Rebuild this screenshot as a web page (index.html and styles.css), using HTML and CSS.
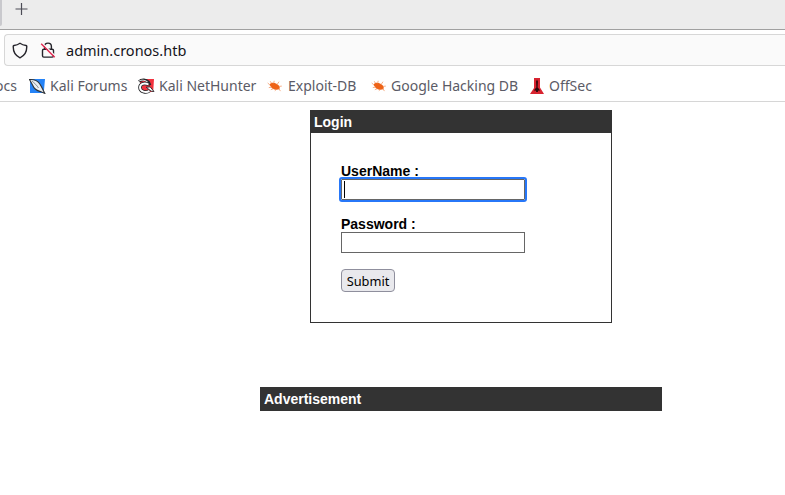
FILE: index.html
```html
<!DOCTYPE html>
<html lang="en">
<head>
<meta charset="utf-8">
<title>Login</title>
<link rel="stylesheet" href="styles.css">
</head>
<body>
<header>
  <div class="tabs">
    <span class="tab-edge"></span>
    <svg class="plus" width="14" height="14" viewBox="0 0 14 14"><path d="M6.5 1v12M.5 7h12" stroke="#4c4c56" stroke-width="1.2" fill="none"/></svg>
  </div>
  <div class="toolbar">
    <div class="address">
      <svg class="shield" width="16" height="17" viewBox="0 0 16 17"><path d="M8 1.2C6 2.6 4 3.2 2 3.5Q1.2 3.7 1.2 4.6C1.2 9.5 3 13.7 8 15.8C13 13.7 14.8 9.5 14.8 4.6Q14.8 3.7 14 3.5C12 3.2 10 2.6 8 1.2Z" fill="none" stroke="#25242b" stroke-width="1.4" stroke-linejoin="round"/></svg>
      <svg class="lock" width="16" height="17" viewBox="0 0 16 17"><path d="M4.6 7V4.5a3.4 3.4 0 0 1 6.8 0V7M3.8 7.3h8.4q1.3 0 1.3 1.3v5.2q0 1.3-1.3 1.3H3.8q-1.3 0-1.3-1.3V8.6q0-1.3 1.3-1.3Z" fill="none" stroke="#25242b" stroke-width="1.4"/><path d="M2.4 1.2L15.5 14.2" stroke="#fafafa" stroke-width="1.4"/><path d="M1.2 1.7L14.7 15.2" stroke="#e22850" stroke-width="1.4"/></svg>
      <span class="url">admin.cronos.htb</span>
    </div>
  </div>
  <nav class="bookmarks">
    <span class="mark docs">ocs</span>
    <span class="mark forums">
      <svg width="17" height="16" viewBox="0 0 17 16"><path d="M1 1h15l-1.3 14H1Z" fill="#2583f7"/><path d="M.5 1.5C5 1.2 9 3 11 6.2L12.6 9L15.8 15.4L11.5 13.6C8.5 12.8 5 10.8 3.8 7.5Z" fill="#e8edf2" stroke="#303438" stroke-width="1.1"/><path d="M3 3.2C5.5 5 8 7.5 9.5 10" fill="none" stroke="#70767e" stroke-width=".8"/></svg>Kali Forums</span>
    <span class="mark nethunter">
      <svg width="17" height="16" viewBox="0 0 17 16"><path d="M2 1h14l-.8 13H2Z" fill="#f2323e"/><path d="M1 3.5C4 1 8 1.5 10.5 4L12 7.3" fill="none" stroke="#25282b" stroke-width="2.8"/><path d="M1.2 3C4 1.6 7.5 2 10 4.5" fill="none" stroke="#fff" stroke-width="1"/><path d="M10.5 6.5C6 4.2 2 6.3 2 9.5C2 13.5 8 15.5 11.5 12.7" fill="none" stroke="#25282b" stroke-width="3.6"/><path d="M10.5 6.5C6 4.2 2 6.3 2 9.5C2 13.5 8 15.5 11.5 12.7" fill="none" stroke="#fff" stroke-width="1.9"/><path d="M8.2 9.2l4-.3 3.8 4.6-2.8-.3-2.5-2Z" fill="#fff" stroke="#25282b" stroke-width=".9"/></svg>Kali NetHunter</span>
    <span class="mark exploit">
      <svg width="16" height="16" viewBox="0 0 16 16"><path d="M2.5 6.8C3.5 4 7 4.2 9.5 5.8C12.5 7.3 13.5 9.5 12.3 11.3C9.8 12.3 6.5 11.8 4.5 9.7Z" fill="#ee6216"/><path d="M2.7 6.8L.7 5M4.5 5.3L3.2 3.2M6.7 5.3l.5-2.5M10 6.7l2-3M12 8.4l2.8-.3M4.5 9.2L1.8 9.6M6.3 10.7l-2.5 1M9.3 11.4l-1.5 1.4M12 10.7l1.4 2.4" stroke="#f49a68" stroke-width=".8"/></svg>Exploit-DB</span>
    <span class="mark ghdb">
      <svg width="16" height="16" viewBox="0 0 16 16"><path d="M2.5 6.8C3.5 4 7 4.2 9.5 5.8C12.5 7.3 13.5 9.5 12.3 11.3C9.8 12.3 6.5 11.8 4.5 9.7Z" fill="#ee6216"/><path d="M2.7 6.8L.7 5M4.5 5.3L3.2 3.2M6.7 5.3l.5-2.5M10 6.7l2-3M12 8.4l2.8-.3M4.5 9.2L1.8 9.6M6.3 10.7l-2.5 1M9.3 11.4l-1.5 1.4M12 10.7l1.4 2.4" stroke="#f49a68" stroke-width=".8"/></svg>Google Hacking DB</span>
    <span class="mark offsec">
      <svg width="14" height="16" viewBox="0 0 14 16"><path d="M4 0h6v9.5L14 16H0l4-6Z" fill="#d82430"/><path d="M7 1.5l.9 2-.3 6 1.9 2v1.8L7.9 12.3V14H6.1v-1.7l-1.6 1v-1.8l1.9-2-.3-6Z" fill="#28080b"/></svg>OffSec</span>
  </nav>
</header>
<main>
  <section class="login">
    <h1 class="bar">Login</h1>
    <form>
      <label for="user">UserName :</label>
      <div class="field focused" id="user"><span class="caret"></span></div>
      <label for="pass">Password :</label>
      <div class="field" id="pass"></div>
      <button type="button">Submit</button>
    </form>
  </section>
  <section class="advert bar">Advertisement</section>
</main>
</body>
</html>
```
FILE: styles.css
```css
* { box-sizing: border-box; }
body {
  margin: 0;
  background: #fff;
  font-family: "Liberation Sans", Arial, sans-serif;
}
svg { display: block; flex: none; }
.tabs {
  display: flex;
  height: 30px;
  background: #ececec;
  border-bottom: 1px solid #a0a0a0;
}
.tab-edge {
  width: 2px;
  height: 26px;
  background: #c9c9cd;
  border-radius: 0 0 2px 0;
}
.plus { margin: 2px 0 0 13px; }
.toolbar { padding: 4px 0 0 4px; }
.address {
  display: flex;
  align-items: center;
  height: 32px;
  padding-left: 7px;
  background: #fafafa;
  border: 1px solid #d7d7d7;
  border-right: 0;
  border-radius: 4px 0 0 4px;
  font: 14.5px "Noto Sans", sans-serif;
  color: #15141a;
}
.lock { margin-left: 12px; }
.url { margin-left: 10px; }
.bookmarks {
  display: flex;
  align-items: center;
  height: 36px;
  padding-top: 4px;
  border-bottom: 1px solid #d6d6d6;
  font: 14px/20px "Noto Sans", sans-serif;
  color: #5b5b66;
  white-space: nowrap;
}
.mark {
  display: flex;
  align-items: center;
  gap: 4px;
  flex: none;
}
.docs { width: 17px; justify-content: flex-end; margin-right: 12px; }
.forums { width: 109px; }
.nethunter { width: 129px; }
.exploit { width: 104px; gap: 5px; }
.ghdb { width: 159px; gap: 4px; }
.offsec { gap: 5px; }
main { padding: 8px 0 0 260px; }
.bar {
  margin: 0;
  padding: 3px;
  background: #333;
  color: #fff;
  font-size: 14px;
  font-weight: bold;
  line-height: 16px;
}
.login {
  width: 302px;
  height: 213px;
  margin-left: 50px;
  border: 1px solid #333;
}
.login .bar { height: 22px; }
form { padding: 30px; }
label {
  display: block;
  height: 16px;
  color: #000;
  font-size: 14px;
  font-weight: bold;
  line-height: 16px;
}
.field {
  width: 184px;
  height: 21px;
  margin-bottom: 16px;
  border: 1px solid #666;
  background: #fff;
}
.focused {
  padding: 1px 2px;
  outline: 2px solid #2777f8;
  border-radius: 1px;
}
.caret { display: block; width: 1px; height: 17px; background: #000; }
button {
  display: block;
  width: 54px;
  height: 23px;
  padding: 0;
  border: 1px solid #8f8f9d;
  border-radius: 4px;
  background: #e9e9ed;
  color: #000;
  font: 12.8px/20px "Noto Sans", sans-serif;
}
.advert {
  width: 402px;
  height: 24px;
  margin-top: 64px;
  padding: 4px;
}
```
